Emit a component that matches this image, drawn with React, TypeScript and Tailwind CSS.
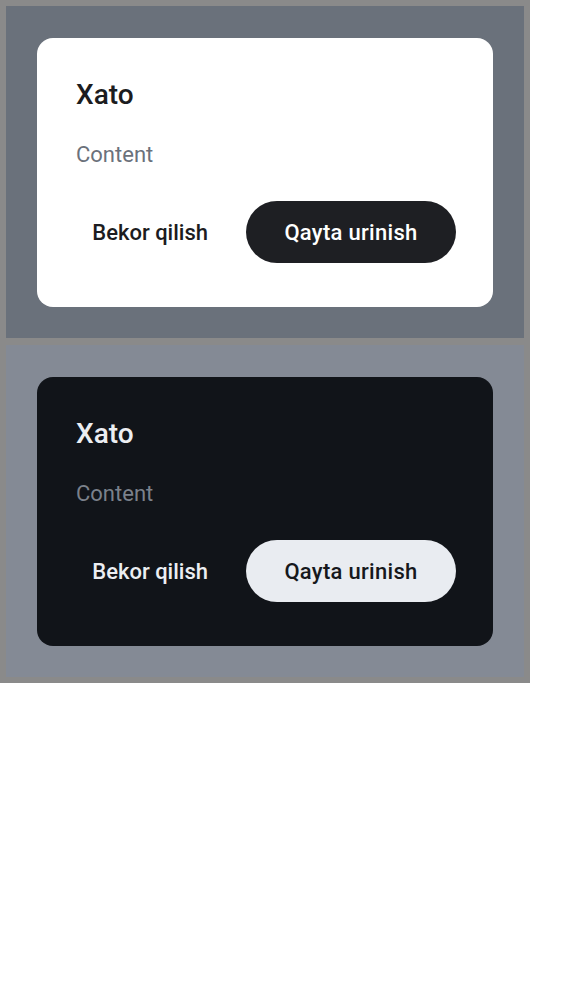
import React from 'react';

type DialogProps = { dark?: boolean };

const ErrorDialog: React.FC<DialogProps> = ({ dark }) => {
  return (
    <div className={`p-[31px] pt-[32px] ${dark ? 'bg-[#848a95]' : 'bg-[#6a717b]'}`}>
      <div
        className={`rounded-[16px] pl-[39px] pr-[37px] pt-[41px] pb-[44px] ${
          dark ? 'bg-[#111419]' : 'bg-white'
        }`}
      >
        <h2
          className={`text-[28px] leading-[32px] font-medium ${dark ? 'text-[#eceef2]' : 'text-[#1c1c20]'}`}
        >
          Xato
        </h2>
        <p className={`mt-[32px] text-[22px] leading-[24px] ${dark ? 'text-[#7b818b]' : 'text-[#6b717b]'}`}>
          Content
        </p>
        <div className="mt-[34px] flex items-center justify-end gap-[18px]">
          <button
            className={`h-[62px] pl-[16px] pr-[20px] rounded-full whitespace-nowrap text-[22px] font-medium ${
              dark ? 'text-[#eceef2]' : 'text-[#1c1c20]'
            }`}
          >
            Bekor qilish
          </button>
          <button
            className={`h-[62px] w-[210px] shrink-0 rounded-full whitespace-nowrap text-[22px] font-medium tracking-[0.3px] ${
              dark ? 'bg-[#e9ecf1] text-[#16181c]' : 'bg-[#1e1f23] text-white'
            }`}
          >
            Qayta urinish
          </button>
        </div>
      </div>
    </div>
  );
};

export default function App() {
  return (
    <div className="min-h-screen bg-white" style={{ fontFamily: 'Roboto, "Noto Sans", sans-serif' }}>
      <div className="w-[530px] bg-[#8a8a8a] p-[6px] flex flex-col gap-[7px]">
        <ErrorDialog />
        <ErrorDialog dark />
      </div>
    </div>
  );
}
